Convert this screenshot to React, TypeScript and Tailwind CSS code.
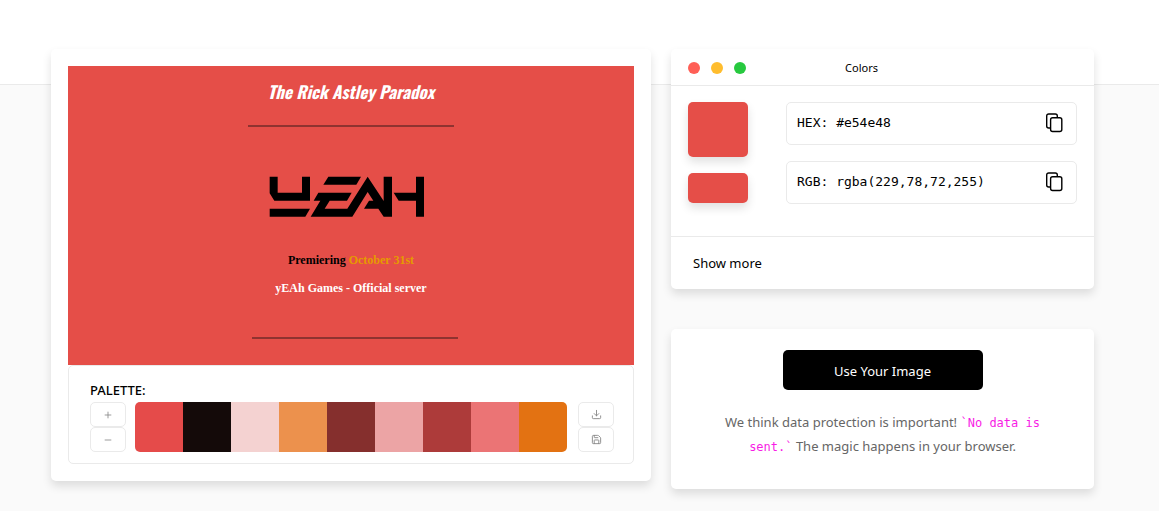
import React from "react";
import { Download, Minus, Plus, Save } from "lucide-react";

const palette = [
  { hex: "#e54b4a", className: "bg-[#e54b4a]" },
  { hex: "#140a09", className: "bg-[#140a09]" },
  { hex: "#f4d2d1", className: "bg-[#f4d2d1]" },
  { hex: "#ec914d", className: "bg-[#ec914d]" },
  { hex: "#852f2d", className: "bg-[#852f2d]" },
  { hex: "#eca4a5", className: "bg-[#eca4a5]" },
  { hex: "#ad3b3a", className: "bg-[#ad3b3a]" },
  { hex: "#eb7475", className: "bg-[#eb7475]" },
  { hex: "#e37212", className: "bg-[#e37212]" },
];

const cardClass = "rounded-[5px] bg-white shadow-[0_5px_10px_rgba(0,0,0,0.12)]";

function CopyIcon() {
  return (
    <svg width="20" height="20" viewBox="0 0 20 20" fill="none" stroke="currentColor" strokeWidth="1.4" aria-hidden="true">
      <path d="M6 15H4.7A2 2 0 0 1 2.7 13V3A2 2 0 0 1 4.7 1H11.3A2 2 0 0 1 13.3 3V4.5" />
      <rect x="6.6" y="4.7" width="11.2" height="13.8" rx="2" />
    </svg>
  );
}

function YeahLogo() {
  return (
    <svg width="156" height="42" viewBox="42 34 468 126" role="img" aria-label="Yeah" className="block">
      <g fill="#000">
        <path d="M44 36H68V84H141V36H165V108H58L44 86Z" />
        <path d="M44 132H165L151 156H44Z" />
        <path d="M220 36H318L304 60H205Z" />
        <path d="M190 84H290L276 108H224L209 132H277L338 36L386 109V36H411V156H386L370 132H327L342 108H355L338 82L292 156H167L196 108H176Z" />
        <path d="M416 84H483V36H507V156H483V108H431Z" />
      </g>
    </svg>
  );
}

function SmallButton({ label, children }: { label: string; children: React.ReactNode }) {
  return (
    <button
      type="button"
      aria-label={label}
      className="flex h-[25px] w-9 items-center justify-center rounded-[5px] border border-[#eaeaea] bg-white text-[#888]"
    >
      {children}
    </button>
  );
}

function Poster() {
  return (
    <div className="flex h-[299px] flex-col items-center bg-[#e54e48] font-['Liberation_Serif',serif] text-[12px] leading-4 font-bold text-white">
      <h1 className="mt-3.5 font-['Oswald','Liberation_Sans_Narrow','Roboto_Condensed','Open_Sans_Condensed','Liberation_Sans',sans-serif] text-[17px] leading-6 font-bold italic">
        The Rick Astley Paradox
      </h1>
      <div className="mt-[21px] h-0.5 w-[206px] bg-[#8f3330]" />
      <div className="mt-[49px] pr-2">
        <YeahLogo />
      </div>
      <p className="mt-[34px] text-black">
        Premiering <span className="text-[#e69a00]">October 31st</span>
      </p>
      <p className="mt-3">yEAh Games - Official server</p>
      <div className="mt-[41px] ml-2 h-0.5 w-[206px] bg-[#8f3330]" />
    </div>
  );
}

function PalettePanel() {
  return (
    <section className="rounded-[5px] border border-[#eaeaea] pt-3 pr-[19px] pb-[11px] pl-[21px]">
      <h2 className="text-[13px] leading-6 font-medium">PALETTE:</h2>
      <div className="flex items-center">
        <div className="flex flex-col">
          <SmallButton label="Add color"><Plus size={10} strokeWidth={2} /></SmallButton>
          <SmallButton label="Remove color"><Minus size={10} strokeWidth={2} /></SmallButton>
        </div>
        <div className="mr-[11px] ml-[9px] flex h-[50px] flex-1 overflow-hidden rounded-[5px]">
          {palette.map((color) => (
            <button key={color.hex} type="button" aria-label={color.hex} className={`flex-1 ${color.className}`} />
          ))}
        </div>
        <div className="flex flex-col">
          <SmallButton label="Download palette"><Download size={11} strokeWidth={2} /></SmallButton>
          <SmallButton label="Save palette"><Save size={11} strokeWidth={2} /></SmallButton>
        </div>
      </div>
    </section>
  );
}

function ValueBox({ text }: { text: string }) {
  return (
    <div className="flex h-[43px] items-center justify-between rounded-[5px] border border-[#eaeaea] pr-3 pb-0.5 pl-2.5">
      <code className="font-['DejaVu_Sans_Mono',monospace] text-[13px] leading-5">{text}</code>
      <button type="button" aria-label={`Copy ${text}`}><CopyIcon /></button>
    </div>
  );
}

function ColorsCard() {
  return (
    <section className={cardClass}>
      <header className="grid h-[37px] grid-cols-[1fr_auto_1fr] items-center border-b border-[#eaeaea] pt-0.5 pr-[42px]">
        <div className="flex gap-[11px] pl-[17px]">
          <span className="size-3 rounded-full bg-[#ff5f56]" />
          <span className="size-3 rounded-full bg-[#ffbd2e]" />
          <span className="size-3 rounded-full bg-[#27c93f]" />
        </div>
        <h2 className="text-[11px] leading-5">Colors</h2>
      </header>
      <div className="flex gap-[38px] px-[17px] pt-4 pb-8">
        <div className="flex w-[60px] flex-col gap-4">
          <div className="h-[55px] rounded-[5px] bg-[#e54e48] shadow-[0_5px_10px_rgba(0,0,0,0.12)]" />
          <div className="h-[30px] rounded-[5px] bg-[#e54e48] shadow-[0_5px_10px_rgba(0,0,0,0.12)]" />
        </div>
        <div className="flex flex-1 flex-col gap-4">
          <ValueBox text="HEX: #e54e48" />
          <ValueBox text="RGB: rgba(229,78,72,255)" />
        </div>
      </div>
      <footer className="border-t border-[#eaeaea] px-[22px] py-[14px]">
        <button type="button" className="block text-[13px] leading-6">Show more</button>
      </footer>
    </section>
  );
}

function UploadCard() {
  return (
    <section className={`${cardClass} flex flex-col items-center px-10 pt-[21px] pb-[31px] text-center`}>
      <button type="button" className="h-10 w-[200px] rounded-[5px] bg-black pt-0.5 text-[13px] leading-5 text-white">
        Use Your Image
      </button>
      <p className="mt-5 text-[13px] leading-6 text-[#666]">
        We think data protection is important!{" "}
        <code className="font-['DejaVu_Sans_Mono',monospace] text-[12px] leading-none text-[#f81ce5]">`No data is sent.`</code>{" "}
        The magic happens in your browser.
      </p>
    </section>
  );
}

export default function App() {
  return (
    <div className="min-h-screen bg-[#fafafa] font-['Noto_Sans',sans-serif] text-black">
      <div className="h-[85px] border-b border-[#eaeaea] bg-white" />
      <main className="relative -mt-9 grid grid-cols-[600fr_423fr] items-start gap-5 pr-[65px] pb-[22px] pl-[51px]">
        <section className={`${cardClass} p-[17px]`}>
          <Poster />
          <PalettePanel />
        </section>
        <div className="flex flex-col gap-10">
          <ColorsCard />
          <UploadCard />
        </div>
      </main>
    </div>
  );
}
